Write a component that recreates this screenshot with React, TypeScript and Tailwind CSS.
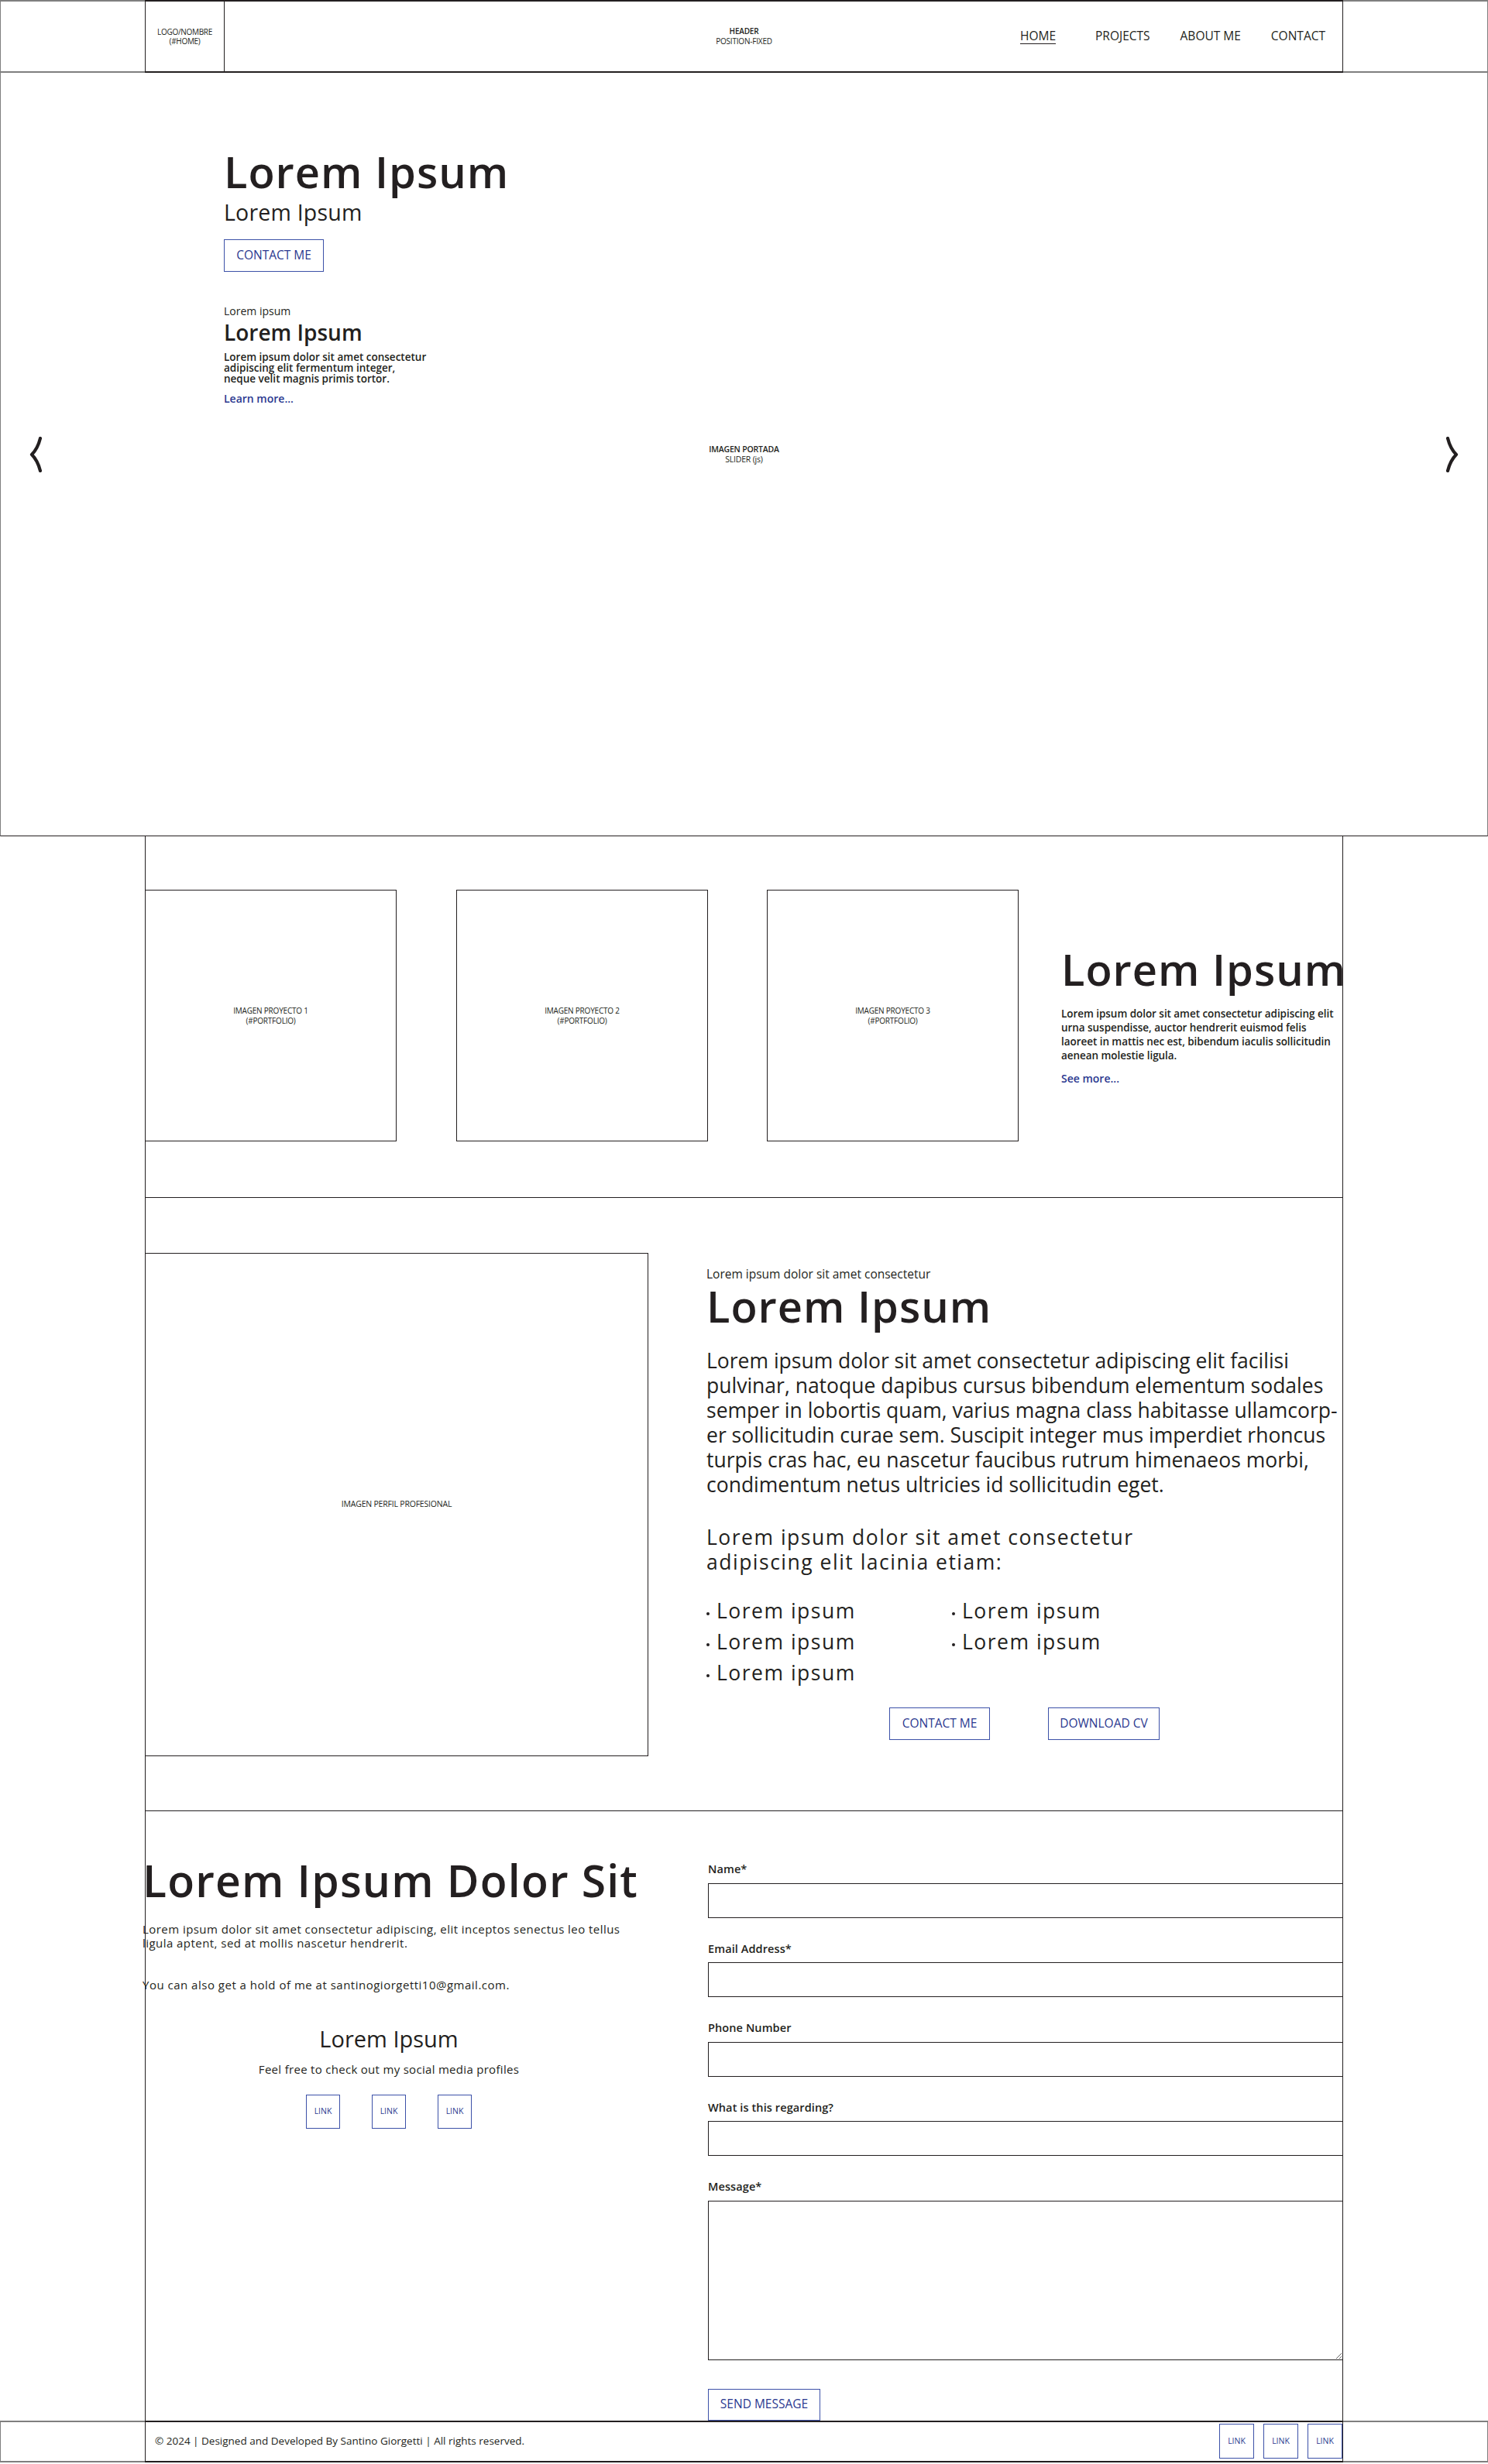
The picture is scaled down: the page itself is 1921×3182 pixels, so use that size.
import React from "react";

function Arrow({ right = false }: { right?: boolean }) {
  return (
    <svg width="22" height="46" viewBox="0 0 22 46" fill="none" aria-hidden="true">
      <path
        d={
          right
            ? "M5 2 C7 10 10 17 16 23 C10 29 7 36 5 44"
            : "M17 2 C15 10 12 17 6 23 C12 29 15 36 17 44"
        }
        stroke="#231f20"
        strokeWidth="4.2"
        strokeLinecap="round"
        strokeLinejoin="round"
      />
    </svg>
  );
}

function ProjectBox({ n, className }: { n: number; className: string }) {
  return (
    <div
      className={`flex h-[325px] w-[325px] shrink-0 flex-col items-center justify-center border border-[#231f20] text-[10px] leading-[13px] tracking-[-0.2px] ${className}`}
    >
      <span>IMAGEN PROYECTO {n}</span>
      <span>(#PORTFOLIO)</span>
    </div>
  );
}

function Bullet() {
  return (
    <div className="flex items-start">
      <span className="mr-[9px] mt-[22px] inline-block h-[4px] w-[4px] shrink-0 rounded-full bg-[#231f20]" />
      <span>Lorem ipsum</span>
    </div>
  );
}

function Field({ label, area = false }: { label: string; area?: boolean }) {
  return (
    <div className="flex flex-col">
      <label className="text-[14.5px] font-semibold leading-none tracking-[0.1px]">{label}</label>
      {area ? (
        <textarea className="mt-[10px] h-[206px] w-full resize-y border border-[#231f20] bg-white outline-none" />
      ) : (
        <input className="mt-[10px] h-[45px] w-full border border-[#231f20] bg-white outline-none" />
      )}
    </div>
  );
}

export default function App() {
  return (
    <div className="w-full bg-white font-['Open_Sans',sans-serif] text-[#231f20]">
      {/* HEADER */}
      <header className="border-x border-y-2 border-[#7f7f7f]">
        <div className="mx-auto -my-[2px] grid h-[94px] w-[1547px] grid-cols-[1fr_auto_1fr] border-x border-y-2 border-[#231f20]">
          <div className="flex">
            <div className="flex w-[102px] flex-col items-center justify-center border-r border-[#231f20] text-[10px] leading-[12px] tracking-[-0.3px]">
              <span>LOGO/NOMBRE</span>
              <span>(#HOME)</span>
            </div>
          </div>
          <div className="flex flex-col items-center justify-center text-[10px] leading-[13px] tracking-[-0.2px]">
            <span className="font-semibold">HEADER</span>
            <span>POSITION-FIXED</span>
          </div>
          <nav className="flex items-center justify-end pr-[22px] text-[15.5px] leading-none">
            <a className="underline decoration-1 underline-offset-[4px]">HOME</a>
            <a className="ml-[51px]">PROJECTS</a>
            <a className="ml-[39px]">ABOUT ME</a>
            <a className="ml-[39px]">CONTACT</a>
          </nav>
        </div>
      </header>

      {/* HERO / SLIDER */}
      <section className="relative h-[986px] border-x border-b border-x-[#7f7f7f] border-b-[#231f20]">
        <div className="pointer-events-none absolute inset-0 flex flex-col items-center justify-center text-[10.5px] leading-[13px] tracking-[-0.2px]">
          <span className="font-semibold">IMAGEN PORTADA</span>
          <span>SLIDER (js)</span>
        </div>
        <button className="absolute left-[34px] top-1/2 -translate-y-1/2">
          <Arrow />
        </button>
        <button className="absolute right-[34px] top-1/2 -translate-y-1/2">
          <Arrow right />
        </button>

        <div className="relative mx-auto w-[1547px] pl-[102px] pt-[99px]">
          <h1 className="text-[56px] font-semibold leading-none tracking-[1px]">Lorem Ipsum</h1>
          <p className="mt-[11px] text-[28.5px] leading-none tracking-[0.2px]">Lorem Ipsum</p>
          <button className="mt-[20px] flex h-[42px] w-[129px] items-center justify-center border border-[#3c51a8] text-[15.5px] text-[#2b3990]">
            CONTACT ME
          </button>
          <p className="mt-[44px] text-[14px] leading-none">Lorem ipsum</p>
          <h2 className="mt-[6px] text-[28px] font-semibold leading-none">Lorem Ipsum</h2>
          <p className="mt-[11px] whitespace-nowrap text-[13.5px] font-semibold leading-[14px]">
            Lorem ipsum dolor sit amet consectetur
            <br />
            adipiscing elit fermentum integer,
            <br />
            neque velit magnis primis tortor.
          </p>
          <a className="mt-[12px] block text-[14px] font-semibold leading-none text-[#2b3990]">Learn more...</a>
        </div>
      </section>

      {/* MAIN */}
      <main className="mx-auto w-[1547px] border-x border-[#231f20]">
        {/* PROJECTS */}
        <section className="flex items-center border-b border-[#231f20] pb-[72px] pt-[69px]">
          <ProjectBox n={1} className="-ml-px" />
          <ProjectBox n={2} className="ml-[77px]" />
          <ProjectBox n={3} className="ml-[76px]" />
          <div className="ml-[55px] flex flex-col">
            <h2 className="whitespace-nowrap text-[56px] font-semibold leading-none tracking-[1px]">Lorem Ipsum</h2>
            <p className="mt-[21px] whitespace-nowrap text-[13.5px] font-semibold leading-[18px] tracking-[-0.05px]">
              Lorem ipsum dolor sit amet consectetur adipiscing elit
              <br />
              urna suspendisse, auctor hendrerit euismod felis
              <br />
              laoreet in mattis nec est, bibendum iaculis sollicitudin
              <br />
              aenean molestie ligula.
            </p>
            <a className="mt-[14px] block text-[14px] font-semibold leading-none text-[#2b3990]">See more...</a>
          </div>
        </section>

        {/* ABOUT */}
        <section className="flex items-start border-b border-[#231f20] pb-[70px] pt-[71px]">
          <div className="-ml-px flex h-[650px] w-[650px] shrink-0 items-center justify-center border border-[#231f20] text-[10.5px] tracking-[-0.2px]">
            IMAGEN PERFIL PROFESIONAL
          </div>
          <div className="ml-[75px] flex flex-1 flex-col pt-[20px]">
            <p className="text-[15.5px] leading-none">Lorem ipsum dolor sit amet consectetur</p>
            <h2 className="mt-[4px] text-[56px] font-semibold leading-none tracking-[1px]">Lorem Ipsum</h2>
            <p className="mt-[27px] whitespace-nowrap text-[26.5px] leading-[32px]">
              Lorem ipsum dolor sit amet consectetur adipiscing elit facilisi
              <br />
              pulvinar, natoque dapibus cursus bibendum elementum sodales
              <br />
              semper in lobortis quam, varius magna class habitasse ullamcorp-
              <br />
              er sollicitudin curae sem. Suscipit integer mus imperdiet rhoncus
              <br />
              turpis cras hac, eu nascetur faucibus rutrum himenaeos morbi,
              <br />
              condimentum netus ultricies id sollicitudin eget.
            </p>
            <p className="mt-[36px] whitespace-nowrap text-[26.5px] leading-[32px] tracking-[1.5px]">
              Lorem ipsum dolor sit amet consectetur
              <br />
              adipiscing elit lacinia etiam:
            </p>
            <div className="mt-[27px] grid grid-cols-[317px_auto] text-[26.5px] leading-[40px] tracking-[1.5px]">
              <Bullet />
              <Bullet />
              <Bullet />
              <Bullet />
              <Bullet />
            </div>
            <div className="mt-[25px] flex justify-center gap-[75px]">
              <button className="flex h-[42px] w-[130px] items-center justify-center border border-[#3c51a8] text-[15.5px] text-[#2b3990]">
                CONTACT ME
              </button>
              <button className="flex h-[42px] w-[144px] items-center justify-center border border-[#3c51a8] text-[15.5px] text-[#2b3990]">
                DOWNLOAD CV
              </button>
            </div>
          </div>
        </section>

        {/* CONTACT */}
        <section className="flex items-start">
          <div className="-ml-[4px] flex w-[636px] shrink-0 flex-col pt-[61px]">
            <h2 className="whitespace-nowrap text-[57px] font-semibold leading-none tracking-[1.2px]">Lorem Ipsum Dolor Sit</h2>
            <p className="mt-[25px] whitespace-nowrap text-[15px] leading-[18px] tracking-[0.45px]">
              Lorem ipsum dolor sit amet consectetur adipiscing, elit inceptos senectus leo tellus
              <br />
              ligula aptent, sed at mollis nascetur hendrerit.
            </p>
            <p className="mt-[36px] text-[15px] leading-[18px] tracking-[0.5px]">
              You can also get a hold of me at santinogiorgetti10@gmail.com.
            </p>
            <h3 className="mt-[46px] text-center text-[29px] leading-none">Lorem Ipsum</h3>
            <p className="mt-[18px] text-center text-[15px] leading-none tracking-[0.3px]">
              Feel free to check out my social media profiles
            </p>
            <div className="mt-[25px] flex justify-center gap-[41px]">
              <a className="flex h-[44px] w-[44px] items-center justify-center border border-[#3c51a8] text-[10.5px] text-[#2b3990]">LINK</a>
              <a className="flex h-[44px] w-[44px] items-center justify-center border border-[#3c51a8] text-[10.5px] text-[#2b3990]">LINK</a>
              <a className="flex h-[44px] w-[44px] items-center justify-center border border-[#3c51a8] text-[10.5px] text-[#2b3990]">LINK</a>
            </div>
          </div>
          <form className="-mr-px ml-[94px] flex flex-1 flex-col gap-[33px] pt-[68px]">
            <Field label="Name*" />
            <Field label="Email Address*" />
            <Field label="Phone Number" />
            <Field label="What is this regarding?" />
            <Field label="Message*" area />
            <button
              type="button"
              className="mt-[4px] flex h-[41px] w-[145px] items-center justify-center border border-[#3c51a8] text-[15.5px] text-[#2b3990]"
            >
              SEND MESSAGE
            </button>
          </form>
        </section>
      </main>

      {/* FOOTER */}
      <footer className="border-x border-y-2 border-[#7f7f7f]">
        <div className="mx-auto -my-[2px] flex h-[54px] w-[1547px] items-center justify-between border-x border-y-2 border-[#231f20] pl-[12px]">
          <p className="text-[13.5px] leading-none">
            © 2024 | Designed and Developed By Santino Giorgetti | All rights reserved.
          </p>
          <div className="flex gap-[12px]">
            <a className="flex h-[45px] w-[45px] items-center justify-center border border-[#3c51a8] text-[10.5px] text-[#2b3990]">LINK</a>
            <a className="flex h-[45px] w-[45px] items-center justify-center border border-[#3c51a8] text-[10.5px] text-[#2b3990]">LINK</a>
            <a className="flex h-[45px] w-[45px] items-center justify-center border border-[#3c51a8] text-[10.5px] text-[#2b3990]">LINK</a>
          </div>
        </div>
      </footer>
    </div>
  );
}
